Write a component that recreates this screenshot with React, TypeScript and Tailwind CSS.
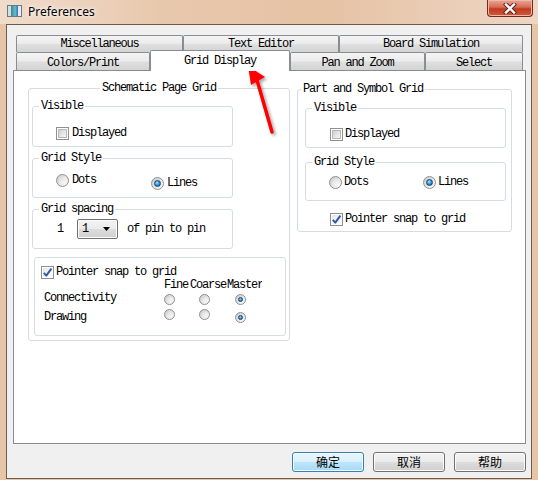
import React from "react";

const TAB_BG =
  "bg-[linear-gradient(#f4f4f4,#ececec_45%,#dedede_55%,#d3d3d3)]";

function Tab({ label, className }: { label: string; className: string }) {
  return (
    <div
      className={`flex items-center justify-center border-x border-t border-[#898c95] rounded-t-[2px] ${TAB_BG} ${className}`}
    >
      {label}
    </div>
  );
}

function Group({
  title,
  className,
  legendClass,
  children,
}: {
  title: string;
  className: string;
  legendClass?: string;
  children?: React.ReactNode;
}) {
  return (
    <fieldset
      className={`border border-[#d5dde3] rounded-[3px] ${className}`}
    >
      <legend className={`px-[2px] leading-[14px] ${legendClass ?? ""}`}>
        {title}
      </legend>
      {children}
    </fieldset>
  );
}

function CheckBox({ checked }: { checked?: boolean }) {
  return (
    <span className="relative flex w-[13px] h-[13px] shrink-0 items-center justify-center border border-[#8e8f8f] bg-white">
      {checked ? (
        <>
          <span className="absolute inset-[1px] bg-[linear-gradient(135deg,#e6e6e6,#ffffff)]" />
          <svg width="11" height="11" viewBox="0 0 11 11" className="relative">
            <path
              d="M1.8 5.8 L4.3 8.6 L9.4 1.6"
              fill="none"
              stroke="#3657a8"
              strokeWidth="2"
              strokeLinejoin="round"
            />
          </svg>
        </>
      ) : (
        <span className="w-[9px] h-[9px] border border-[#b3b8bd] bg-[linear-gradient(135deg,#cfcfcf,#f7f7f7)]" />
      )}
    </span>
  );
}

function Radio({ checked, small }: { checked?: boolean; small?: boolean }) {
  const size = small ? "w-[11px] h-[11px]" : "w-[13px] h-[13px]";
  const dot = small ? "w-[5px] h-[5px]" : "w-[7px] h-[7px]";
  return (
    <span
      className={`flex shrink-0 items-center justify-center rounded-full border border-[#8e8f8f] bg-[linear-gradient(135deg,#c9c9c9,#ffffff)] ${size}`}
    >
      {checked ? (
        <span
          className={`rounded-full border border-[#16466f] bg-[radial-gradient(circle_at_40%_35%,#9fe0ff,#2a8fd6_55%,#0c4f86)] ${dot}`}
        />
      ) : (
        <span
          className={`rounded-full bg-[linear-gradient(135deg,#dcdcdc,#fbfbfb)] ${dot}`}
        />
      )}
    </span>
  );
}

function Button({ label, primary }: { label: string; primary?: boolean }) {
  return (
    <div
      className={
        primary
          ? "flex w-[72px] h-[20px] items-center justify-center rounded-[3px] border border-[#3c7fb1] bg-[linear-gradient(#eaf6fd,#d9f0fc_50%,#bee6fd_50%,#a7d9f5)] shadow-[inset_0_0_0_1px_#f4fbff] font-['Noto_Sans_CJK_SC',sans-serif] text-[12px] tracking-normal"
          : "flex w-[72px] h-[20px] items-center justify-center rounded-[3px] border border-[#707070] bg-[linear-gradient(#f2f2f2,#ebebeb_50%,#dddddd_50%,#cfcfcf)] shadow-[inset_0_0_0_1px_#fcfcfc] font-['Noto_Sans_CJK_SC',sans-serif] text-[12px] tracking-normal"
      }
    >
      {label}
    </div>
  );
}

export default function App() {
  return (
    <div className="relative flex h-[480px] w-[538px] flex-col overflow-hidden bg-[#e7c5a8] font-['Liberation_Mono',monospace] text-[12px] leading-[14px] tracking-[-1.2px] text-black">
      {/* title bar */}
      <div className="flex h-[24px] shrink-0 items-start bg-[linear-gradient(90deg,#f0dccb,#e8c8ad_30%,#e6c2a4_60%,#eed6c4)]">
        <div className="ml-[7px] mt-[5px] flex h-[12px] w-[15px] border border-[#6f7780] bg-white">
          <div className="w-[3px] bg-[#d8dde2]" />
          <div className="flex-1 bg-[linear-gradient(90deg,#2f8f7c,#6fb7d6_60%,#2f6fb8)]" />
          <div className="w-[3px] bg-[#e8ecef]" />
        </div>
        <span className="ml-[6px] mt-[4px] font-['Noto_Sans',sans-serif] text-[12px] leading-[16px] tracking-normal [text-shadow:0_0_6px_#fff,0_0_3px_#fff]">
          Preferences
        </span>
        <div className="ml-auto mr-[5px] flex h-[17px] w-[46px] items-center justify-center rounded-b-[4px] border border-t-0 border-[#6d2a1e] bg-[linear-gradient(#e9a898,#d66a53_45%,#c13a20_55%,#d2583d)] shadow-[inset_0_0_0_1px_#f1b8a8]">
          <svg width="14" height="11" viewBox="0 0 14 11">
            <path
              d="M3 1.5 L11 9.5 M11 1.5 L3 9.5"
              stroke="#5a2218"
              strokeWidth="4.2"
              strokeLinecap="square"
            />
            <path
              d="M3 1.5 L11 9.5 M11 1.5 L3 9.5"
              stroke="#ffffff"
              strokeWidth="2.4"
              strokeLinecap="square"
            />
          </svg>
        </div>
      </div>

      {/* client area */}
      <div className="mx-[6px] flex h-[455px] flex-col border border-[#6c5d50] bg-[#f0f0f0]">
        {/* tab rows */}
        <div className="ml-[9px] mt-[10px] flex">
          <Tab label="Miscellaneous" className="h-[17px] w-[167px]" />
          <Tab label="Text Editor" className="h-[17px] w-[156px]" />
          <Tab label="Board Simulation" className="h-[17px] w-[184px]" />
        </div>
        <div className="ml-[9px] flex h-[18px] items-end">
          <Tab label="Colors/Print" className="h-[18px] w-[134px] pt-[2px]" />
          <div className="relative z-10 -mb-[1px] flex h-[21px] w-[140px] items-center justify-center rounded-t-[2px] border-x border-t border-[#898c95] bg-white">
            Grid Display
          </div>
          <Tab label="Pan and Zoom" className="h-[18px] w-[135px] pt-[2px]" />
          <Tab label="Select" className="h-[18px] w-[98px] pt-[2px]" />
        </div>

        {/* tab page */}
        <div className="ml-[6px] flex h-[374px] w-[513px] items-start border border-[#898c95] bg-white pl-[14px] pt-[10px]">
          {/* schematic grid */}
          <Group
            title="Schematic Page Grid"
            className="h-[260px] w-[261px] px-[3px]"
            legendClass="mx-auto"
          >
            <Group title="Visible" className="mt-[4px] h-[48px] w-[201px] pl-[6px]">
              <div className="ml-[17px] mt-[13px] flex h-[14px] items-center gap-[3px]">
                <CheckBox />
                <span>Displayed</span>
              </div>
            </Group>

            <Group title="Grid Style" className="mt-[4px] h-[47px] w-[201px] pl-[6px]">
              <div className="ml-[17px] mt-[8px] flex">
                <div className="flex h-[14px] w-[95px] items-center gap-[3px]">
                  <Radio />
                  <span>Dots</span>
                </div>
                <div className="mt-[3px] flex h-[14px] items-center gap-[3px]">
                  <Radio checked />
                  <span>Lines</span>
                </div>
              </div>
            </Group>

            <Group title="Grid spacing" className="mt-[4px] h-[47px] w-[201px] pl-[6px]">
              <div className="mt-[3px] flex h-[20px] items-center">
                <span className="ml-[18px] w-[20px]">1</span>
                <div className="flex h-[20px] w-[41px] items-center rounded-[2px] border border-[#707070] bg-[linear-gradient(#f2f2f2,#ebebeb_50%,#dddddd_50%,#cfcfcf)] pl-[4px] shadow-[inset_0_0_0_1px_#fcfcfc]">
                  <span>1</span>
                  <svg width="7" height="4" viewBox="0 0 7 4" className="ml-auto mr-[7px]">
                    <path d="M0 0 H7 L3.5 4 Z" fill="#000" />
                  </svg>
                </div>
                <span className="ml-[9px]">of pin to pin</span>
              </div>
            </Group>

            <div className="ml-[2px] mt-[8px] h-[79px] w-[252px] rounded-[3px] border border-[#d5dde3]">
              <div className="ml-[6px] mt-[7px] flex h-[14px] items-center gap-[2px]">
                <CheckBox checked />
                <span>Pointer snap to grid</span>
              </div>
              <div className="ml-[9px] flex flex-col">
                <div className="flex h-[12px] items-center">
                  <span className="w-[120px]" />
                  <span className="w-[26px] overflow-hidden whitespace-nowrap pr-[2px]">
                    Fine
                  </span>
                  <span className="w-[37px] overflow-hidden whitespace-nowrap">
                    Coarse
                  </span>
                  <span className="w-[35px] overflow-hidden whitespace-nowrap">
                    Master
                  </span>
                </div>
                <div className="flex h-[16px] items-start">
                  <span className="w-[120px]">Connectivity</span>
                  <span className="w-[26px] pt-[3px]">
                    <Radio small />
                  </span>
                  <span className="w-[37px] pl-[9px] pt-[3px]">
                    <Radio small />
                  </span>
                  <span className="w-[37px] pl-[8px] pt-[3px]">
                    <Radio small checked />
                  </span>
                </div>
                <div className="flex h-[18px] items-start">
                  <span className="mt-[3px] w-[120px]">Drawing</span>
                  <span className="w-[26px] pt-[2px]">
                    <Radio small />
                  </span>
                  <span className="w-[37px] pl-[9px] pt-[2px]">
                    <Radio small />
                  </span>
                  <span className="w-[37px] pl-[8px] pt-[5px]">
                    <Radio small checked />
                  </span>
                </div>
              </div>
            </div>
          </Group>

          {/* part and symbol grid */}
          <Group
            title="Part and Symbol Grid"
            className="ml-[7px] mt-[1px] h-[150px] w-[215px] px-[3px]"
          >
            <Group title="Visible" className="ml-[4px] mt-[5px] h-[47px] w-[201px] pl-[6px]">
              <div className="ml-[18px] mt-[12px] flex h-[14px] items-center gap-[2px]">
                <CheckBox />
                <span>Displayed</span>
              </div>
            </Group>

            <Group title="Grid Style" className="ml-[4px] mt-[7px] h-[46px] w-[201px] pl-[6px]">
              <div className="ml-[17px] mt-[6px] flex">
                <div className="flex h-[14px] w-[94px] items-center gap-[2px]">
                  <Radio />
                  <span>Dots</span>
                </div>
                <div className="flex h-[14px] items-center gap-[2px]">
                  <Radio checked />
                  <span>Lines</span>
                </div>
              </div>
            </Group>

            <div className="ml-[29px] mt-[11px] flex h-[14px] items-center gap-[2px]">
              <CheckBox checked />
              <span>Pointer snap to grid</span>
            </div>
          </Group>
        </div>

        {/* dialog buttons */}
        <div className="mt-[8px] flex w-[519px] justify-end gap-[9px]">
          <Button label="确定" primary />
          <Button label="取消" />
          <Button label="帮助" />
        </div>
      </div>

      {/* red callout arrow pointing at the active tab */}
      <svg
        className="pointer-events-none absolute left-0 top-0"
        width="538"
        height="480"
        viewBox="0 0 538 480"
      >
        <defs>
          <filter id="arrowShadow" x="-50%" y="-50%" width="200%" height="200%">
            <feDropShadow dx="2" dy="2" stdDeviation="1.5" floodColor="#000" floodOpacity="0.35" />
          </filter>
        </defs>
        <g filter="url(#arrowShadow)">
          <line
            x1="257"
            y1="80"
            x2="272"
            y2="132"
            stroke="#ff0000"
            strokeWidth="3.5"
            strokeLinecap="round"
          />
          <polygon points="248,66 265,77 251,85" fill="#ff0000" />
        </g>
      </svg>
    </div>
  );
}
